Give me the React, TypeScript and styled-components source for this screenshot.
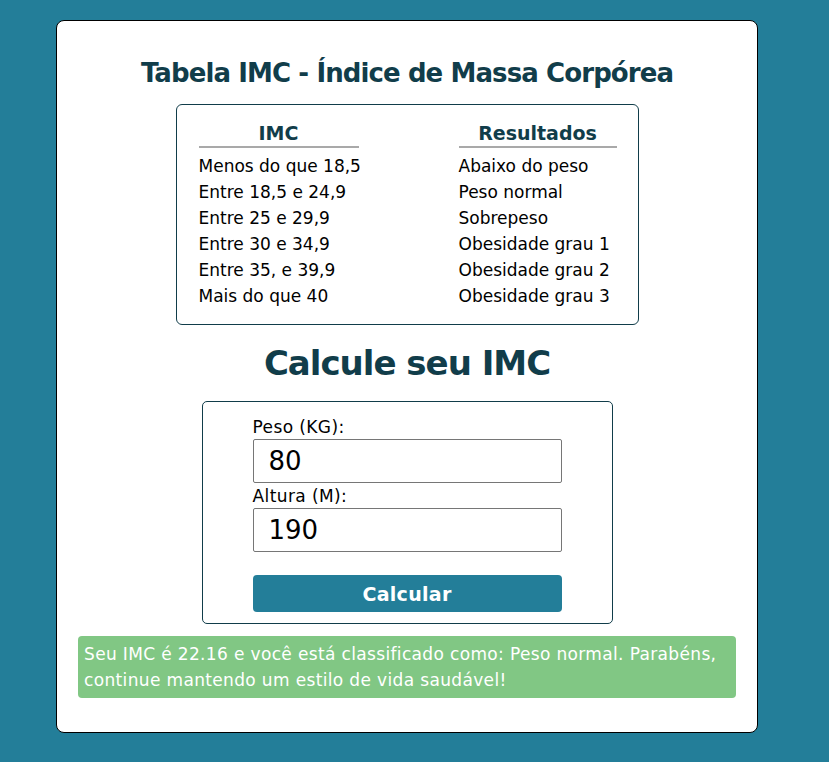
import React from "react";
import styled, { createGlobalStyle } from "styled-components";

const Global = createGlobalStyle`
  html, body { margin: 0; padding: 0; }
  body {
    background: #237e99;
    font-family: "DejaVu Sans", "Noto Sans", sans-serif;
    color: #000;
  }
`;

const Page = styled.div`
  padding: 20px 0 30px 56px;
`;

const Card = styled.main`
  box-sizing: border-box;
  width: 702px;
  background: #fff;
  border: 1px solid #000;
  border-radius: 8px;
  padding: 35px 21px 34px;
  display: flex;
  flex-direction: column;
  align-items: center;
`;

const Title = styled.h1`
  margin: 0;
  font-size: 26px;
  line-height: 34px;
  font-weight: 700;
  letter-spacing: -0.9px;
  color: #113d4a;
  text-align: center;
  white-space: nowrap;
`;

const TableBox = styled.div`
  margin-top: 14px;
  width: 463px;
  box-sizing: border-box;
  border: 1px solid #113d4a;
  border-radius: 6px;
  padding: 15px 22px 15px;
  display: grid;
  grid-template-columns: 160px 158px;
  column-gap: 100px;
`;

const Column = styled.div`
  display: flex;
  flex-direction: column;
`;

const Head = styled.div`
  font-size: 19px;
  line-height: 26px;
  font-weight: 700;
  color: #113d4a;
  text-align: center;
  border-bottom: 2px solid #a9a9a9;
  margin-bottom: 5px;
`;

const Cell = styled.div`
  font-size: 17px;
  line-height: 26px;
  white-space: nowrap;
`;

const SubTitle = styled.h2`
  margin: 16px 0 16px;
  font-size: 34px;
  line-height: 44px;
  font-weight: 700;
  letter-spacing: -1px;
  color: #113d4a;
`;

const Form = styled.form`
  width: 411px;
  box-sizing: border-box;
  border: 1px solid #113d4a;
  border-radius: 5px;
  padding: 13px 50px 11px;
  display: flex;
  flex-direction: column;
`;

const Label = styled.label`
  font-size: 17px;
  line-height: 24px;
  letter-spacing: 0.4px;
`;

const Input = styled.input`
  box-sizing: border-box;
  width: 100%;
  height: 44px;
  border: 1px solid #767676;
  border-radius: 2px;
  padding: 0 0 0 15px;
  font-family: "DejaVu Sans", sans-serif;
  font-size: 26px;
  color: #000;
  margin-bottom: 1px;
  outline: none;
`;

const Button = styled.button`
  margin-top: 22px;
  height: 37px;
  border: none;
  border-radius: 4px;
  background: #237e99;
  color: #fff;
  font-family: "DejaVu Sans", sans-serif;
  font-size: 19px;
  font-weight: 700;
  letter-spacing: 0.3px;
  cursor: pointer;
`;

const Result = styled.div`
  margin-top: 12px;
  align-self: stretch;
  background: #81c784;
  color: #fff;
  border-radius: 4px;
  padding: 5px 4px 5px 6px;
  font-size: 17px;
  line-height: 26px;
  letter-spacing: 0.35px;
`;

const rows: [string, string][] = [
  ["Menos do que 18,5", "Abaixo do peso"],
  ["Entre 18,5 e 24,9", "Peso normal"],
  ["Entre 25 e 29,9", "Sobrepeso"],
  ["Entre 30 e 34,9", "Obesidade grau 1"],
  ["Entre 35, e 39,9", "Obesidade grau 2"],
  ["Mais do que 40", "Obesidade grau 3"],
];

export default function App() {
  return (
    <Page>
      <Global />
      <Card>
        <Title>Tabela IMC - Índice de Massa Corpórea</Title>
        <TableBox>
          <Column>
            <Head>IMC</Head>
            {rows.map((r) => (
              <Cell key={r[0]}>{r[0]}</Cell>
            ))}
          </Column>
          <Column>
            <Head>Resultados</Head>
            {rows.map((r) => (
              <Cell key={r[1]}>{r[1]}</Cell>
            ))}
          </Column>
        </TableBox>
        <SubTitle>Calcule seu IMC</SubTitle>
        <Form onSubmit={(e) => e.preventDefault()}>
          <Label htmlFor="peso">Peso (KG):</Label>
          <Input id="peso" defaultValue="80" />
          <Label htmlFor="altura">Altura (M):</Label>
          <Input id="altura" defaultValue="190" />
          <Button type="submit">Calcular</Button>
        </Form>
        <Result>
          Seu IMC é 22.16 e você está classificado como: Peso normal. Parabéns,
          continue mantendo um estilo de vida saudável!
        </Result>
      </Card>
    </Page>
  );
}
